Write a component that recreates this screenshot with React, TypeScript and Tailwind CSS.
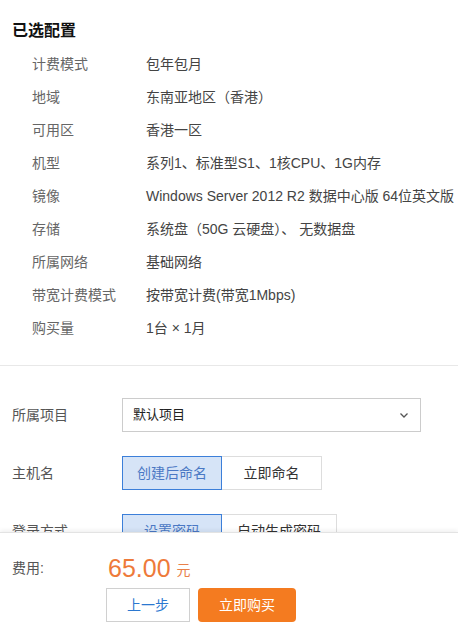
const font = {
  fontFamily: '"Liberation Sans", "Noto Sans CJK SC", Arial, sans-serif',
};

const config = [
  { label: "计费模式", value: "包年包月" },
  { label: "地域", value: "东南亚地区（香港）" },
  { label: "可用区", value: "香港一区" },
  { label: "机型", value: "系列1、标准型S1、1核CPU、1G内存" },
  { label: "镜像", value: "Windows Server 2012 R2 数据中心版 64位英文版" },
  { label: "存储", value: "系统盘（50G 云硬盘）、 无数据盘" },
  { label: "所属网络", value: "基础网络" },
  { label: "带宽计费模式", value: "按带宽计费(带宽1Mbps)" },
  { label: "购买量", value: "1台 × 1月" },
];

const Segmented = ({ items, widths }: { items: string[]; widths: string[] }) => (
  <div className="flex">
    {items.map((item, i) =>
      i === 0 ? (
        <div
          key={item}
          className={`${widths[i]} h-[34px] flex items-center justify-center border border-[#3c7fd9] bg-[#d6e4f7] text-[14px] text-[#4a78c4]`}
        >
          {item}
        </div>
      ) : (
        <div
          key={item}
          className={`${widths[i]} h-[34px] flex items-center justify-center border border-l-0 border-[#dddddd] bg-white text-[14px] text-[#333]`}
        >
          {item}
        </div>
      )
    )}
  </div>
);

const App = () => {
  return (
    <div className="h-[628px] w-[458px] flex flex-col bg-white overflow-hidden" style={font}>
      <div className="flex-1 overflow-hidden">
        <div className="pt-5 pb-5 border-b border-[#e8e8e8]">
          <h2 className="pl-3 text-[16px] leading-[22px] font-bold text-[#111]">已选配置</h2>
          <div className="mt-[6px]">
            {config.map((row) => (
              <div key={row.label} className="h-[33px] flex items-center text-[14px]">
                <span className="pl-8 w-[146px] shrink-0 text-[#666]">{row.label}</span>
                <span className="whitespace-nowrap text-[#444]">{row.value}</span>
              </div>
            ))}
          </div>
        </div>

        <div className="pt-8 flex flex-col gap-6">
          <div className="flex items-center h-[34px]">
            <span className="pl-3 w-[122px] shrink-0 text-[14px] text-[#555]">所属项目</span>
            <div className="w-[299px] h-[34px] border border-[#cccccc] flex items-center justify-between pl-[10px] pr-[10px]">
              <span className="text-[13px] text-[#222]">默认项目</span>
              <svg width="12" height="12" viewBox="0 0 12 12" fill="none">
                <path d="M2.5 4.5 6 8l3.5-3.5" stroke="#555" strokeWidth="1.3" />
              </svg>
            </div>
          </div>
          <div className="flex items-center h-[34px]">
            <span className="pl-3 w-[122px] shrink-0 text-[14px] text-[#555]">主机名</span>
            <Segmented items={["创建后命名", "立即命名"]} widths={["w-[100px]", "w-[100px]"]} />
          </div>
          <div className="flex items-center h-[34px]">
            <span className="pl-3 w-[122px] shrink-0 text-[14px] text-[#555]">登录方式</span>
            <Segmented items={["设置密码", "自动生成密码"]} widths={["w-[100px]", "w-[115px]"]} />
          </div>
        </div>
      </div>

      <div className="h-[96px] shrink-0 bg-white border-t border-[#e3e3e3] shadow-[0_-2px_4px_rgba(0,0,0,0.06)] pt-5">
        <div className="flex items-center h-[30px] pl-3">
          <span className="w-[96px] text-[14px] text-[#555]">费用:</span>
          <span className="text-[25px] leading-[30px] text-[#ee7a3a]">65.00</span>
          <span className="ml-[6px] mt-[4px] text-[14px] text-[#e9804a]">元</span>
        </div>
        <div className="mt-[5px] pl-[106px] flex gap-2">
          <button className="w-[84px] h-[34px] border border-[#d0d0d0] bg-white text-[14px] text-[#2b78d0]">
            上一步
          </button>
          <button className="w-[98px] h-[34px] rounded-sm bg-[#f47b20] text-[14px] text-white">
            立即购买
          </button>
        </div>
      </div>
    </div>
  );
};

export default App;
